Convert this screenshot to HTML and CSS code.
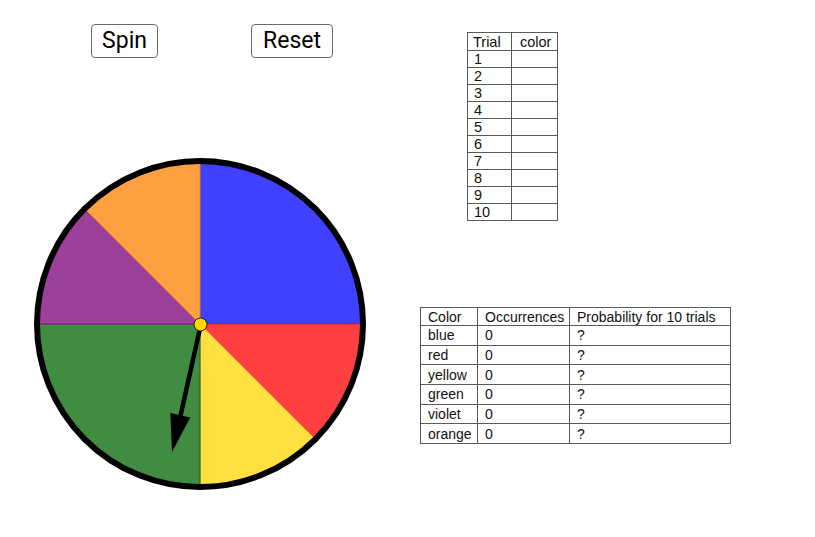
FILE: index.html
```html
<!DOCTYPE html>
<html lang="en">
<head>
    <meta charset="UTF-8">
    <title>Spinner - Probability</title>
    <link rel="stylesheet" href="styles.css">
</head>
<body>
    <div class="app">
        <div class="left">
            <div class="buttons">
                <button class="btn btn-spin">Spin</button>
                <button class="btn btn-reset">Reset</button>
            </div>
            <svg class="wheel" width="420" height="479" viewBox="0 58 420 479">
                <!-- sectors -->
                <path d="M200 324 L200 163 A161 161 0 0 1 361 324 Z" fill="#4040ff" stroke="#3030d0" stroke-width="1"/>
                <path d="M200 324 L361 324 A161 161 0 0 1 313.8 437.8 Z" fill="#ff4040" stroke="#d02030" stroke-width="1"/>
                <path d="M200 324 L313.8 437.8 A161 161 0 0 1 200 485 Z" fill="#ffe040" stroke="#e8a020" stroke-width="1"/>
                <path d="M200 324 L200 485 A161 161 0 0 1 39 324 Z" fill="#408c40" stroke="#206020" stroke-width="1"/>
                <path d="M200 324 L39 324 A161 161 0 0 1 86.2 210.2 Z" fill="#9c409c" stroke="#7a207a" stroke-width="1"/>
                <path d="M200 324 L86.2 210.2 A161 161 0 0 1 200 163 Z" fill="#ffa040" stroke="#f08020" stroke-width="1"/>
                <circle cx="200" cy="324" r="163" fill="none" stroke="#000" stroke-width="6"/>
                <!-- arrow -->
                <line x1="201" y1="324" x2="180" y2="418" stroke="#000" stroke-width="4.5"/>
                <polygon points="170.3,413.1 190.3,417.6 172,452" fill="#000"/>
                <circle cx="200.5" cy="324.5" r="6.5" fill="#ffd700" stroke="#222" stroke-width="1"/>
            </svg>
        </div>
        <div class="right">
            <table class="trials">
                <tr><th class="c1">Trial</th><th class="c2">color</th></tr>
                <tr><td>1</td><td></td></tr>
                <tr><td>2</td><td></td></tr>
                <tr><td>3</td><td></td></tr>
                <tr><td>4</td><td></td></tr>
                <tr><td>5</td><td></td></tr>
                <tr><td>6</td><td></td></tr>
                <tr><td>7</td><td></td></tr>
                <tr><td>8</td><td></td></tr>
                <tr><td>9</td><td></td></tr>
                <tr><td>10</td><td></td></tr>
            </table>
            <table class="stats">
                <tr><th class="s1">Color</th><th class="s2">Occurrences</th><th class="s3">Probability for 10 trials</th></tr>
                <tr><td>blue</td><td>0</td><td>?</td></tr>
                <tr><td>red</td><td>0</td><td>?</td></tr>
                <tr><td>yellow</td><td>0</td><td>?</td></tr>
                <tr><td>green</td><td>0</td><td>?</td></tr>
                <tr><td>violet</td><td>0</td><td>?</td></tr>
                <tr><td>orange</td><td>0</td><td>?</td></tr>
            </table>
        </div>
    </div>
</body>
</html>
```

FILE: styles.css
```css
body {
    margin: 0;
    background-color: #fff;
    color: #000;
    font-family: "Liberation Sans", Arial, sans-serif;
}
.app {
    display: flex;
    width: 815px;
    height: 537px;
    overflow: hidden;
}
.left {
    width: 420px;
    flex-shrink: 0;
}
.buttons {
    display: flex;
    gap: 93px;
    padding: 24px 0 0 91px;
    height: 34px;
}
.btn {
    height: 34px;
    box-sizing: border-box;
    background-color: #fff;
    border: 1px solid #6a6a6a;
    border-radius: 4px;
    font-family: Roboto, "Liberation Sans", sans-serif;
    font-size: 23px;
    color: #000;
    padding: 0;
    line-height: 32px;
}
.btn-spin { width: 67px; }
.btn-reset { width: 82px; }
.wheel { display: block; }
.right {
    display: flex;
    flex-direction: column;
    align-items: flex-start;
}
table {
    border-collapse: collapse;
    font-size: 14.5px;
}
th, td {
    border: 1px solid #5a5a5a;
    text-align: left;
    font-weight: normal;
    padding: 0;
    line-height: 16px;
    color: #111;
}
.trials {
    margin: 32px 0 0 47px;
}
.trials th { height: 17px; padding-left: 5px; }
.trials td { height: 16px; padding-left: 6px; }
.trials .c1 { width: 38px; }
.trials .c2 { width: 37px; padding-left: 8px; }
.stats {
    margin-top: 86px;
    font-size: 14px;
}
.stats th { height: 17px; padding-left: 7px; }
.stats td { height: 18.7px; padding-left: 7px; }
.stats .s1 { width: 49px; }
.stats .s2 { width: 84px; }
.stats .s3 { width: 153px; }
```
